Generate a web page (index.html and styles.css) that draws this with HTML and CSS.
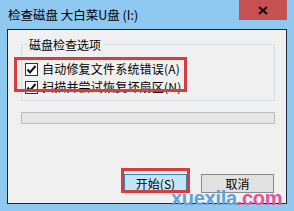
FILE: index.html
```html
<!DOCTYPE html>
<html>
<head>
<meta charset="utf-8">
<link rel="stylesheet" href="styles.css">
</head>
<body>
<div class="window">
  <div class="titlebar">
    <span class="title">检查磁盘 大白菜U盘 (I:)</span>
    <div class="close">
      <svg width="10" height="9" viewBox="0 0 10 9"><path d="M1 1 L9 8 M9 1 L1 8" stroke="#111" stroke-width="2.2" fill="none"/></svg>
    </div>
  </div>
  <div class="client">
    <div class="group">
      <div class="legend">磁盘检查选项</div>
      <div class="row">
        <span class="cb"><svg width="13" height="13" viewBox="0 0 13 13"><rect x="0.5" y="0.5" width="12" height="12" fill="#fff" stroke="#333"/><path d="M2.5 6.5 L5 9.5 L10.5 3" stroke="#111" stroke-width="2" fill="none"/></svg></span>
        <span class="txt">自动修复文件系统错误(A)</span>
      </div>
      <div class="row">
        <span class="cb"><svg width="13" height="13" viewBox="0 0 13 13"><rect x="0.5" y="0.5" width="12" height="12" fill="#fff" stroke="#333"/><path d="M2.5 6.5 L5 9.5 L10.5 3" stroke="#111" stroke-width="2" fill="none"/></svg></span>
        <span class="txt">扫描并尝试恢复坏扇区(N)</span>
      </div>
    </div>
    <div class="progress"></div>
    <div class="buttons">
      <div class="btn default">开始(S)</div>
      <div class="btn">取消</div>
    </div>
  </div>
  <div class="mark mark-checks"></div>
  <div class="mark mark-start"></div>
  <div class="watermark"><span class="wm-a">xuexila</span><span class="wm-b">.com</span></div>
</div>
</body>
</html>
```
FILE: styles.css
```css
html, body {
  margin: 0;
  padding: 0;
}
body {
  background: #8fc8f0;
  font-family: "Noto Sans CJK SC", "Noto Sans", sans-serif;
  font-size: 12px;
  color: #000;
}
.window {
  position: relative;
  width: 294px;
  height: 211px;
  background: #8fc8f0;
  overflow: hidden;
}
.titlebar {
  display: flex;
  height: 29px;
}
.title {
  padding: 6px 0 0 8px;
  line-height: 18px;
  font-size: 12.5px;
}
.close {
  margin-left: auto;
  margin-right: 7px;
  width: 48px;
  height: 20px;
  background: #c75050;
  display: flex;
  align-items: center;
  justify-content: center;
}
.client {
  margin: 0 7px 7px;
  height: 175px;
  box-sizing: border-box;
  border: 1px solid #1b2733;
  background: #f0f0f0;
  padding: 14px 11px 0 13px;
  display: flex;
  flex-direction: column;
}
.group {
  height: 57px;
  box-sizing: border-box;
  border: 1px solid #d5dfe5;
  padding: 0 0 0 3px;
}
.legend {
  margin: -8px 0 0 2px;
  padding: 0 2px;
  background: #f0f0f0;
  width: max-content;
  line-height: 15px;
}
.row {
  display: flex;
  align-items: center;
  height: 18px;
}
.legend + .row {
  margin-top: 8px;
}
.cb {
  width: 13px;
  height: 13px;
  display: flex;
}
.txt {
  margin-left: 4px;
  line-height: 16px;
  letter-spacing: 0.2px;
}
.progress {
  margin-top: 11px;
  height: 12px;
  box-sizing: border-box;
  border: 1px solid #bcbcbc;
  background: #e6e6e6;
}
.buttons {
  margin-top: 50px;
  margin-right: 1px;
  display: flex;
  justify-content: flex-end;
  gap: 14px;
}
.btn {
  width: 73px;
  height: 19px;
  box-sizing: border-box;
  border: 1px solid #8a8a8a;
  background: #e1e1e1;
  display: flex;
  align-items: center;
  justify-content: center;
  line-height: 14px;
}
.btn.default {
  width: 63px;
  border-color: #3c7fb1;
  background: #c4e5f8;
}
.mark {
  position: absolute;
  border: 3px solid #d83c3c;
  box-sizing: border-box;
}
.mark-checks {
  left: 14px;
  top: 57px;
  width: 173px;
  height: 35px;
}
.mark-start {
  left: 121px;
  top: 168px;
  width: 69px;
  height: 25px;
}
.watermark {
  position: absolute;
  left: 171px;
  top: 192px;
  font-family: "Liberation Sans", Arial, sans-serif;
  font-weight: bold;
  font-size: 20px;
  line-height: 12px;
  letter-spacing: -0.3px;
}
.wm-a {
  color: #5fa3dc;
}
.wm-b {
  color: #e0559a;
}
```
